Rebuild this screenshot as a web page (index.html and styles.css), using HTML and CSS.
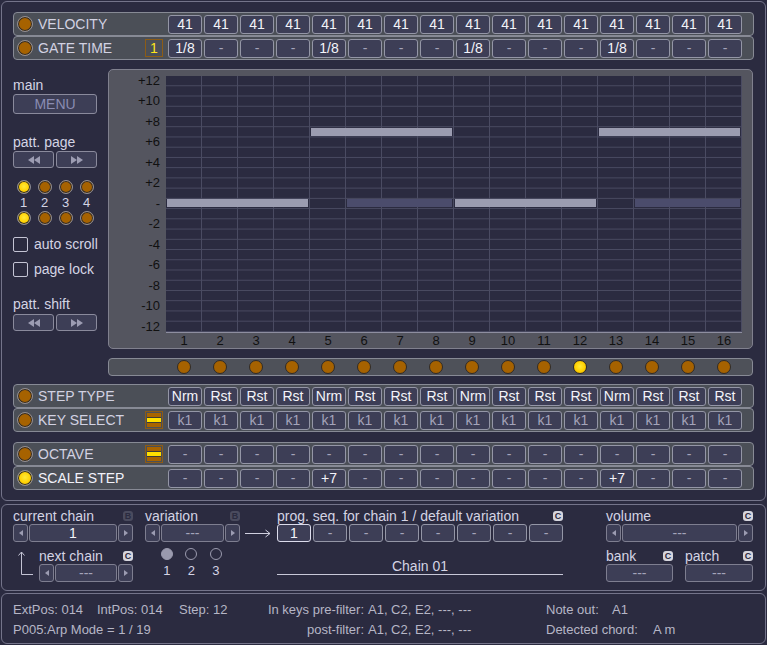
FILE: index.html
```html
<!DOCTYPE html>
<html lang="en">
<head>
    <meta charset="UTF-8">
    <meta name="viewport" content="width=device-width, initial-scale=1.0">
    <title>Arpeggiator</title>
    <link rel="stylesheet" href="styles.css">
</head>
<body>
    <div class="panel main">
        <div class="rows">
            <div class="row">
                <span class="led"></span>
                <span class="row-label">VELOCITY</span>
                <span class="row-extra"></span>
                <div class="cells">
                    <span class="cell">41</span><span class="cell">41</span><span class="cell">41</span><span class="cell">41</span>
                    <span class="cell">41</span><span class="cell">41</span><span class="cell">41</span><span class="cell">41</span>
                    <span class="cell">41</span><span class="cell">41</span><span class="cell">41</span><span class="cell">41</span>
                    <span class="cell">41</span><span class="cell">41</span><span class="cell">41</span><span class="cell">41</span>
                </div>
            </div>
            <div class="row">
                <span class="led"></span>
                <span class="row-label">GATE TIME</span>
                <span class="row-extra gate">1</span>
                <div class="cells">
                    <span class="cell">1/8</span><span class="cell dim">-</span><span class="cell dim">-</span><span class="cell dim">-</span>
                    <span class="cell">1/8</span><span class="cell dim">-</span><span class="cell dim">-</span><span class="cell dim">-</span>
                    <span class="cell">1/8</span><span class="cell dim">-</span><span class="cell dim">-</span><span class="cell dim">-</span>
                    <span class="cell">1/8</span><span class="cell dim">-</span><span class="cell dim">-</span><span class="cell dim">-</span>
                </div>
            </div>
        </div>

        <div class="middle">
            <div class="side">
                <div class="side-label first">main</div>
                <div class="menu">MENU</div>

                <div class="side-label page">patt. page</div>
                <div class="pager">
                    <div class="pager-btn">
                        <svg width="12" height="8" viewBox="0 0 12 8"><polygon points="0,4 6,0 6,8"/><polygon points="6,4 12,0 12,8"/></svg>
                    </div>
                    <div class="pager-btn">
                        <svg width="12" height="8" viewBox="0 0 12 8"><polygon points="0,0 6,4 0,8"/><polygon points="6,0 12,4 6,8"/></svg>
                    </div>
                </div>

                <div class="page-leds">
                    <span class="led small on"></span><span class="led small"></span><span class="led small"></span><span class="led small"></span>
                    <span class="num">1</span><span class="num">2</span><span class="num">3</span><span class="num">4</span>
                    <span class="led small on"></span><span class="led small"></span><span class="led small"></span><span class="led small"></span>
                </div>

                <div class="check first"><span class="box"></span>auto scroll</div>
                <div class="check"><span class="box"></span>page lock</div>

                <div class="side-label shift">patt. shift</div>
                <div class="pager">
                    <div class="pager-btn">
                        <svg width="12" height="8" viewBox="0 0 12 8"><polygon points="0,4 6,0 6,8"/><polygon points="6,4 12,0 12,8"/></svg>
                    </div>
                    <div class="pager-btn">
                        <svg width="12" height="8" viewBox="0 0 12 8"><polygon points="0,0 6,4 0,8"/><polygon points="6,0 12,4 6,8"/></svg>
                    </div>
                </div>
            </div>

            <div class="editor">
                <div class="graph">
                    <div class="y-axis">
                        <span>+12</span><span>+10</span><span>+8</span><span>+6</span><span>+4</span><span>+2</span><span>-</span>
                        <span>-2</span><span>-4</span><span>-6</span><span>-8</span><span>-10</span><span>-12</span>
                    </div>
                    <div class="plot-wrap">
                        <div class="plot">
                            <span class="bar" style="left: 1px; top: 123px; width: 141px;"></span>
                            <span class="bar" style="left: 145px; top: 52px; width: 141px;"></span>
                            <span class="bar ghost" style="left: 181px; top: 123px; width: 105px;"></span>
                            <span class="bar" style="left: 289px; top: 123px; width: 141px;"></span>
                            <span class="bar" style="left: 433px; top: 52px; width: 141px;"></span>
                            <span class="bar ghost" style="left: 469px; top: 123px; width: 105px;"></span>
                        </div>
                        <div class="x-axis">
                            <span>1</span><span>2</span><span>3</span><span>4</span><span>5</span><span>6</span><span>7</span><span>8</span>
                            <span>9</span><span>10</span><span>11</span><span>12</span><span>13</span><span>14</span><span>15</span><span>16</span>
                        </div>
                    </div>
                </div>
                <div class="step-leds">
                    <span class="led step"></span><span class="led step"></span><span class="led step"></span><span class="led step"></span>
                    <span class="led step"></span><span class="led step"></span><span class="led step"></span><span class="led step"></span>
                    <span class="led step"></span><span class="led step"></span><span class="led step"></span><span class="led step on"></span>
                    <span class="led step"></span><span class="led step"></span><span class="led step"></span><span class="led step"></span>
                </div>
            </div>
        </div>

        <div class="rows second">
            <div class="row">
                <span class="led"></span>
                <span class="row-label">STEP TYPE</span>
                <span class="row-extra"></span>
                <div class="cells">
                    <span class="cell">Nrm</span><span class="cell">Rst</span><span class="cell">Rst</span><span class="cell">Rst</span>
                    <span class="cell">Nrm</span><span class="cell">Rst</span><span class="cell">Rst</span><span class="cell">Rst</span>
                    <span class="cell">Nrm</span><span class="cell">Rst</span><span class="cell">Rst</span><span class="cell">Rst</span>
                    <span class="cell">Nrm</span><span class="cell">Rst</span><span class="cell">Rst</span><span class="cell">Rst</span>
                </div>
            </div>
            <div class="row">
                <span class="led"></span>
                <span class="row-label">KEY SELECT</span>
                <span class="row-extra stripes"></span>
                <div class="cells">
                    <span class="cell dim">k1</span><span class="cell dim">k1</span><span class="cell dim">k1</span><span class="cell dim">k1</span>
                    <span class="cell dim">k1</span><span class="cell dim">k1</span><span class="cell dim">k1</span><span class="cell dim">k1</span>
                    <span class="cell dim">k1</span><span class="cell dim">k1</span><span class="cell dim">k1</span><span class="cell dim">k1</span>
                    <span class="cell dim">k1</span><span class="cell dim">k1</span><span class="cell dim">k1</span><span class="cell dim">k1</span>
                </div>
            </div>
        </div>

        <div class="rows third">
            <div class="row">
                <span class="led"></span>
                <span class="row-label">OCTAVE</span>
                <span class="row-extra stripes"></span>
                <div class="cells">
                    <span class="cell dim">-</span><span class="cell dim">-</span><span class="cell dim">-</span><span class="cell dim">-</span>
                    <span class="cell dim">-</span><span class="cell dim">-</span><span class="cell dim">-</span><span class="cell dim">-</span>
                    <span class="cell dim">-</span><span class="cell dim">-</span><span class="cell dim">-</span><span class="cell dim">-</span>
                    <span class="cell dim">-</span><span class="cell dim">-</span><span class="cell dim">-</span><span class="cell dim">-</span>
                </div>
            </div>
            <div class="row">
                <span class="led on"></span>
                <span class="row-label bright">SCALE STEP</span>
                <span class="row-extra"></span>
                <div class="cells">
                    <span class="cell dim">-</span><span class="cell dim">-</span><span class="cell dim">-</span><span class="cell dim">-</span>
                    <span class="cell">+7</span><span class="cell dim">-</span><span class="cell dim">-</span><span class="cell dim">-</span>
                    <span class="cell dim">-</span><span class="cell dim">-</span><span class="cell dim">-</span><span class="cell dim">-</span>
                    <span class="cell">+7</span><span class="cell dim">-</span><span class="cell dim">-</span><span class="cell dim">-</span>
                </div>
            </div>
        </div>
    </div>

    <div class="panel chain-panel">
        <div class="col col-chain">
            <div class="head"><span>current chain</span><span class="tag off">B</span></div>
            <div class="spin">
                <span class="spin-btn"><svg width="4" height="6" viewBox="0 0 4 6"><polygon points="4,0 0,3 4,6"/></svg></span>
                <span class="spin-val">1</span>
                <span class="spin-btn"><svg width="4" height="6" viewBox="0 0 4 6"><polygon points="0,0 4,3 0,6"/></svg></span>
            </div>
            <div class="next">
                <svg class="hook" width="26" height="32" viewBox="0 0 26 32">
                    <path d="M8.5 5 V27.5 H20"/>
                    <path d="M5.5 8.5 L8.5 5 L11.5 8.5"/>
                </svg>
                <div class="next-body">
                    <div class="head"><span>next chain</span><span class="tag">C</span></div>
                    <div class="spin">
                        <span class="spin-btn"><svg width="4" height="6" viewBox="0 0 4 6"><polygon points="4,0 0,3 4,6"/></svg></span>
                        <span class="spin-val dim">---</span>
                        <span class="spin-btn"><svg width="4" height="6" viewBox="0 0 4 6"><polygon points="0,0 4,3 0,6"/></svg></span>
                    </div>
                </div>
            </div>
        </div>

        <div class="col col-variation">
            <div class="head"><span>variation</span><span class="tag off">B</span></div>
            <div class="spin">
                <span class="spin-btn"><svg width="4" height="6" viewBox="0 0 4 6"><polygon points="4,0 0,3 4,6"/></svg></span>
                <span class="spin-val dim">---</span>
                <span class="spin-btn"><svg width="4" height="6" viewBox="0 0 4 6"><polygon points="0,0 4,3 0,6"/></svg></span>
            </div>
            <div class="radios">
                <span class="radio on"></span><span class="radio"></span><span class="radio"></span>
                <span class="num">1</span><span class="num">2</span><span class="num">3</span>
            </div>
        </div>

        <div class="col col-arrow">
            <svg width="26" height="18" viewBox="0 0 26 18">
                <path d="M0 9.5 H25"/>
                <path d="M20.5 6 L25 9.5 L20.5 13"/>
            </svg>
        </div>

        <div class="col col-prog">
            <div class="head"><span>prog. seq. for chain 1 / default variation</span><span class="tag">C</span></div>
            <div class="prog-cells">
                <span class="cell current">1</span><span class="cell dim">-</span><span class="cell dim">-</span><span class="cell dim">-</span>
                <span class="cell dim">-</span><span class="cell dim">-</span><span class="cell dim">-</span><span class="cell dim">-</span>
            </div>
            <div class="chain-name">Chain 01</div>
        </div>

        <div class="col col-sound">
            <div class="head"><span>volume</span><span class="tag">C</span></div>
            <div class="spin">
                <span class="spin-btn"><svg width="4" height="6" viewBox="0 0 4 6"><polygon points="4,0 0,3 4,6"/></svg></span>
                <span class="spin-val dim">---</span>
                <span class="spin-btn"><svg width="4" height="6" viewBox="0 0 4 6"><polygon points="0,0 4,3 0,6"/></svg></span>
            </div>
            <div class="bank-patch">
                <div>
                    <div class="head"><span>bank</span><span class="tag">C</span></div>
                    <div class="field">---</div>
                </div>
                <div>
                    <div class="head"><span>patch</span><span class="tag">C</span></div>
                    <div class="field">---</div>
                </div>
            </div>
        </div>
    </div>

    <div class="panel status">
        <div class="status-grid">
            <div><span class="w84">ExtPos: 014</span><span class="w82">IntPos: 014</span><span>Step: 12</span></div>
            <div class="filter-label">In keys pre-filter:</div>
            <div>A1, C2, E2, ---, ---</div>
            <div><span class="w66">Note out:</span>A1</div>

            <div>P005:Arp Mode = 1 / 19</div>
            <div class="filter-label">post-filter:</div>
            <div>A1, C2, E2, ---, ---</div>
            <div><span class="w107">Detected chord:</span>A m</div>
        </div>
    </div>
</body>
</html>
```

FILE: styles.css
```css
body {
    margin: 0;
    padding: 0;
    background: #2b2b40;
    color: #d4d4e4;
    font-family: "Liberation Sans", Arial, sans-serif;
    font-size: 14px;
}
.panel {
    margin-left: 1px;
    width: 765px;
    box-sizing: border-box;
    border: 1px solid #74748a;
    border-radius: 6px;
}
.main {
    margin-top: 1px;
    height: 500px;
    padding: 10px 11px 0 11px;
}

/* parameter rows */
.rows {
    width: 741px;
}
.rows.second {
    margin-top: 8px;
}
.rows.third {
    margin-top: 10px;
}
.row {
    display: flex;
    align-items: center;
    height: 24px;
    box-sizing: border-box;
    padding-left: 3px;
    background: #4b4f57;
    border: 1px solid #878a95;
    border-radius: 4px;
}
.row-label {
    width: 107px;
    margin-left: 5px;
    color: #d2d2e2;
    line-height: 16px;
    white-space: nowrap;
}
.row-label.bright {
    color: #f2f2fa;
}
.row-extra {
    width: 18px;
    height: 18px;
    margin-right: 5px;
    box-sizing: border-box;
}
.row-extra.gate {
    border: 1px solid #8c5c16;
    color: #ffe41a;
    text-align: center;
    line-height: 16px;
}
.row-extra.stripes {
    border: 1px solid #8c5c16;
    padding: 1px;
    background: linear-gradient(#a86400 0 4px, #3c3a38 4px 5px, #ffe000 5px 9px, #3c3a38 9px 10px, #a86400 10px 14px);
    background-clip: content-box;
    background-origin: content-box;
}
.cells {
    display: grid;
    grid-template-columns: repeat(16, 34px);
    gap: 2px;
}
.cell {
    height: 19px;
    box-sizing: border-box;
    border: 1px solid #9496a6;
    border-radius: 3px;
    background: #3d3e56;
    color: #f4f4fa;
    text-align: center;
    line-height: 17px;
}
.cell.dim {
    color: #a4a4ba;
}

/* leds */
.led {
    width: 16px;
    height: 16px;
    box-sizing: border-box;
    border-radius: 50%;
    border: 1px solid #8e8e98;
    box-shadow: inset 0 0 0 1px #2e2a28;
    background: #a66200;
}
.led.on {
    background: radial-gradient(circle at 50% 45%, #ffea3a 0, #ffd000 55%, #e0a800 100%);
}
.led.small {
    width: 14px;
    height: 14px;
}
.led.step {
    width: 14px;
    height: 14px;
    border: 1px solid #2e2a28;
    box-shadow: none;
}

/* middle part */
.middle {
    display: flex;
    margin-top: 9px;
}
.side {
    width: 84px;
    margin-right: 11px;
    white-space: nowrap;
}
.side-label {
    line-height: 16px;
}
.side-label.first {
    margin-top: 8px;
}
.side-label.page {
    margin-top: 20px;
}
.side-label.shift {
    margin-top: 19px;
}
.menu {
    margin-top: 1px;
    height: 20px;
    box-sizing: border-box;
    border: 1px solid #8a8a9c;
    border-radius: 3px;
    background: #3d3e56;
    color: #8a8cb2;
    text-align: center;
    line-height: 18px;
}
.pager {
    display: flex;
    gap: 2px;
    margin-top: 1px;
}
.side-label.shift + .pager {
    margin-top: 2px;
}
.pager-btn {
    flex: 1;
    height: 17px;
    box-sizing: border-box;
    border: 1px solid #8a8a9c;
    border-radius: 3px;
    background: #3d3e56;
    display: flex;
    align-items: center;
    justify-content: center;
}
.pager-btn svg {
    fill: #9c9cb2;
}
.page-leds {
    display: grid;
    grid-template-columns: repeat(4, 21px);
    grid-template-rows: 14px 17px 14px;
    justify-items: center;
    align-items: center;
    margin-top: 12px;
}
.num {
    font-size: 13px;
    line-height: 16px;
}
.check {
    display: flex;
    align-items: center;
    height: 15px;
    margin-top: 10px;
    line-height: 15px;
}
.check.first {
    margin-top: 12px;
}
.check .box {
    flex: none;
    width: 15px;
    height: 15px;
    box-sizing: border-box;
    border: 1px solid #c4c4d4;
    border-radius: 2px;
    margin-right: 6px;
}

/* graph */
.editor {
    width: 645px;
}
.graph {
    display: flex;
    height: 280px;
    box-sizing: border-box;
    padding: 6px 10px 0 0;
    background: #54555f;
    border: 1px solid #80808e;
    border-radius: 5px;
}
.y-axis {
    width: 51px;
    margin-right: 6px;
    margin-top: -5.12px;
    display: flex;
    flex-direction: column;
    align-items: flex-end;
    color: #111;
    font-size: 13px;
}
.y-axis span {
    height: 20.48px;
    line-height: 20.48px;
}
.plot {
    position: relative;
    width: 576px;
    height: 256px;
    background-color: #2b2b40;
    background-image:
        linear-gradient(to right, transparent 35px, #4a4b62 35px),
        linear-gradient(to bottom, transparent 9.24px, #4a4b62 9.24px);
    background-size: 36px 100%, 100% 10.24px;
    border-bottom: 1px solid #8e8ea0;
}
.bar {
    position: absolute;
    height: 8px;
    background: #9b9cb0;
}
.bar.ghost {
    background: #4b4c6c;
}
.x-axis {
    display: grid;
    grid-template-columns: repeat(16, 36px);
    color: #111;
    font-size: 13px;
    line-height: 15px;
    text-align: center;
}
.step-leds {
    display: grid;
    grid-template-columns: repeat(16, 36px);
    justify-items: center;
    align-items: center;
    height: 18px;
    margin-top: 9px;
    padding-left: 57px;
    box-sizing: border-box;
    background: #4e5159;
    border: 1px solid #878a95;
    border-radius: 4px;
}

/* chain panel */
.chain-panel {
    display: flex;
    height: 87px;
    margin-top: 3px;
    padding: 2px 11px 0 11px;
    white-space: nowrap;
}
.head {
    display: flex;
    justify-content: space-between;
    align-items: center;
    height: 17px;
    line-height: 16px;
}
.tag {
    width: 10px;
    height: 10px;
    border-radius: 3px;
    background: #d6d6de;
    color: #2b2b40;
    font-size: 9px;
    font-weight: bold;
    line-height: 10px;
    text-align: center;
}
.tag.off {
    background: #4a4b5e;
    color: #2b2b40;
}
.spin {
    display: flex;
    gap: 1px;
    height: 18px;
}
.spin-btn {
    width: 15px;
    box-sizing: border-box;
    border: 1px solid #7e7e90;
    border-radius: 3px;
    background: #3d3e56;
    display: flex;
    align-items: center;
    justify-content: center;
}
.spin-btn svg {
    fill: #9c9cb2;
}
.spin-val {
    flex: 1;
    box-sizing: border-box;
    border: 1px solid #7e7e90;
    border-radius: 3px;
    background: #3d3e56;
    color: #f4f4fa;
    text-align: center;
    line-height: 16px;
}
.spin-val.dim,
.field {
    color: #a4a4ba;
}
.col-chain {
    width: 120px;
}
.next {
    display: flex;
    margin-top: 5px;
}
.hook {
    flex: none;
    fill: none;
    stroke: #c4c4d4;
    stroke-width: 1;
}
.next-body {
    flex: 1;
}
.col-variation {
    width: 95px;
    margin-left: 12px;
}
.radios {
    display: grid;
    grid-template-columns: repeat(3, 24.5px);
    grid-template-rows: 12px 16px;
    row-gap: 3px;
    justify-items: center;
    align-items: center;
    margin-top: 6px;
    padding-left: 9.5px;
}
.radio {
    width: 12px;
    height: 12px;
    box-sizing: border-box;
    border: 1.5px solid #9a9aae;
    border-radius: 50%;
}
.radio.on {
    background: #9a9aae;
}
.col-arrow {
    width: 26px;
    margin-left: 5px;
    padding-top: 17px;
}
.col-arrow svg {
    fill: none;
    stroke: #d0d0e0;
    stroke-width: 1;
}
.col-prog {
    width: 286px;
    margin-left: 6px;
}
.prog-cells {
    display: grid;
    grid-template-columns: repeat(8, 34px);
    gap: 2px;
}
.prog-cells .cell {
    height: 18px;
    line-height: 16px;
}
.prog-cells .cell.current {
    border-color: #dcdcec;
}
.chain-name {
    margin-top: 16px;
    line-height: 16px;
    text-align: center;
    border-bottom: 1px solid #c8c8d8;
}
.col-sound {
    width: 147px;
    margin-left: 43px;
}
.bank-patch {
    display: grid;
    grid-template-columns: 67px 68px;
    gap: 12px;
    margin-top: 5px;
}
.field {
    height: 18px;
    box-sizing: border-box;
    border: 1px solid #7e7e90;
    border-radius: 3px;
    background: #3d3e56;
    text-align: center;
    line-height: 16px;
}

/* status */
.status {
    height: 51px;
    margin-top: 2px;
    padding: 6px 11px 0 11px;
    color: #b6b6c6;
    font-size: 13px;
    white-space: nowrap;
}
.status-grid {
    display: grid;
    grid-template-columns: 240px 115px 178px 1fr;
    line-height: 20px;
}
.filter-label {
    text-align: right;
    padding-right: 4px;
}
.w84 { display: inline-block; width: 84px; }
.w82 { display: inline-block; width: 82px; }
.w66 { display: inline-block; width: 66px; }
.w107 { display: inline-block; width: 107px; }
```
